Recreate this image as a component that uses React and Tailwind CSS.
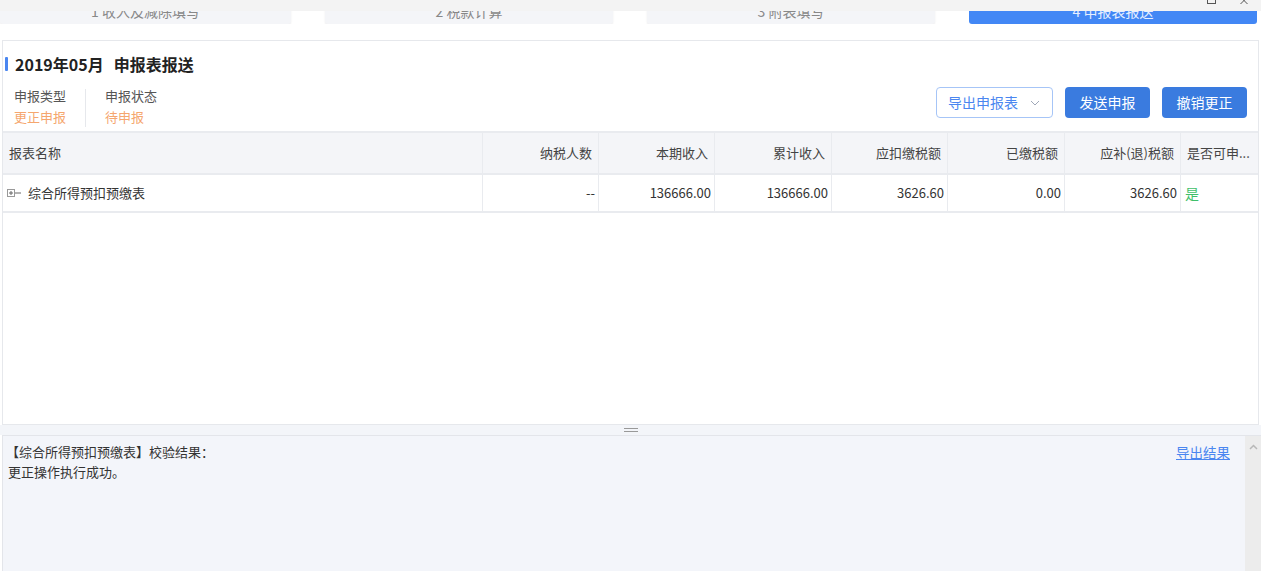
import React from 'react';

const cols = [
  { title: '报表名称', value: '综合所得预扣预缴表', align: 'left' },
  { title: '纳税人数', value: '--', align: 'right' },
  { title: '本期收入', value: '136666.00', align: 'right' },
  { title: '累计收入', value: '136666.00', align: 'right' },
  { title: '应扣缴税额', value: '3626.60', align: 'right' },
  { title: '已缴税额', value: '0.00', align: 'right' },
  { title: '应补(退)税额', value: '3626.60', align: 'right' },
  { title: '是否可申...', value: '是', align: 'left' },
];

const tabs = ['1 收入及减除填写', '2 税款计算', '3 附表填写', '4 申报表报送'];

const App = () => {
  return (
    <div
      className="w-[1261px] h-[571px] overflow-hidden bg-white text-[#333]"
      style={{ fontFamily: '"Noto Sans CJK SC", "Noto Sans", sans-serif' }}
    >
      {/* top: clipped step tabs under the window bar */}
      <div className="relative h-[24px] overflow-hidden">
        <div className="flex gap-[34px] mt-[-10px]">
          {tabs.map((t, i) => (
            <div
              key={t}
              className={
                'h-[34px] flex items-start justify-center pt-[12px] rounded-[3px] text-[14px] leading-[18px] ' +
                (i === 0 ? 'w-[291px] ' : 'w-[288px] ') +
                (i === 3
                  ? 'bg-[#4287f5] text-[#e6efff]'
                  : 'bg-[#f4f5f8] text-[#888] shadow-[0_1px_2px_rgba(0,0,0,0.08)]')
              }
            >
              {t}
            </div>
          ))}
        </div>
        <div className="absolute top-0 left-0 right-0 h-[11px] bg-[#f3f3f3] flex items-start justify-end pr-[12px] gap-[24px]">
          <div className="w-[9px] h-[5px] border-x border-b border-[#555] mt-[-1px]"></div>
          <svg width="9" height="6" viewBox="0 0 9 6" className="mt-[-1px]">
            <path d="M0.5 -2 L7.5 5 M7.5 -2 L0.5 5" stroke="#555" strokeWidth="1" fill="none" />
          </svg>
        </div>
      </div>

      <div className="h-[16px]"></div>

      {/* main panel */}
      <div className="mx-[2px] h-[385px] border border-[#e6e8ec] flex flex-col">
        <div className="flex items-center pt-[14px] h-[32px]">
          <div className="w-[3px] h-[14px] bg-[#4a86f0] ml-[2px] rounded-[1px]"></div>
          <div className="ml-[7px] text-[16px] font-bold leading-[18px] text-[#222]">
            2019年05月<span className="ml-[10px]">申报表报送</span>
          </div>
        </div>

        <div className="flex justify-between items-start h-[58px] pt-[12px]">
          <div className="flex pl-[11px] text-[13px] leading-[21px]">
            <div className="pr-[19px] border-r border-[#e6e8ec] my-[4px]">
              <div className="-mt-[4px] text-[#555]">申报类型</div>
              <div className="text-[#f5a66e]">更正申报</div>
            </div>
            <div className="pl-[19px]">
              <div className="text-[#555]">申报状态</div>
              <div className="text-[#f5a66e]">待申报</div>
            </div>
          </div>
          <div className="flex gap-[12px] pr-[11px] pt-[2px]">
            <div className="w-[117px] h-[31px] border border-[#a6c5f7] rounded-[4px] flex items-center pl-[11px] text-[14px] text-[#4a86f0]">
              导出申报表
              <svg width="10" height="6" viewBox="0 0 10 6" className="ml-[12px]">
                <path d="M1 1 L5 5 L9 1" stroke="#a0a8b8" strokeWidth="1" fill="none" />
              </svg>
            </div>
            <div className="w-[85px] h-[31px] bg-[#3a7bdf] rounded-[4px] flex items-center justify-center text-[14px] text-white">
              发送申报
            </div>
            <div className="w-[85px] h-[31px] bg-[#3a7bdf] rounded-[4px] flex items-center justify-center text-[14px] text-white">
              撤销更正
            </div>
          </div>
        </div>

        {/* table */}
        <div className="grid grid-cols-[480px_116px_116px_117px_116px_117px_116px_1fr] text-[13px]">
          {cols.map((c, i) => (
            <div
              key={'h' + i}
              className={
                'h-[44px] bg-[#f4f5f8] border-y-2 border-[#e9ebef] flex items-center text-[#444] ' +
                (i < cols.length - 1 ? 'border-r ' : '') +
                (c.align === 'right' ? 'justify-end pr-[6px]' : 'justify-start pl-[6px]')
              }
            >
              {c.title}
            </div>
          ))}
          {cols.map((c, i) => (
            <div
              key={'r' + i}
              className={
                'h-[38px] border-b-2 border-[#e9ebef] flex items-center text-[#333] ' +
                (i < cols.length - 1 ? 'border-r ' : '') +
                (c.align === 'right' ? 'justify-end pr-[3px]' : 'justify-start pl-[4px]')
              }
            >
              {i === 0 ? (
                <>
                  <svg width="15" height="9" viewBox="0 0 15 9" className="mr-[6px]">
                    <rect x="0.5" y="0.5" width="7" height="7" fill="none" stroke="#999" />
                    <path d="M2 4 H6 M4 2 V6 M8 4 H14" stroke="#666" strokeWidth="1" />
                  </svg>
                  {c.value}
                </>
              ) : i === cols.length - 1 ? (
                <span className="text-[#3fbf6a] text-[14px]">{c.value}</span>
              ) : (
                c.value
              )}
            </div>
          ))}
        </div>
        <div className="flex-1"></div>
      </div>

      {/* splitter */}
      <div className="h-[10px] bg-[#f3f5f9] flex items-center justify-center">
        <div className="w-[14px] h-[4px] border-y border-[#999]"></div>
      </div>

      {/* result panel */}
      <div className="ml-[2px] h-[140px] bg-[#f3f5fa] border-t border-l border-[#e3e5ea] flex">
        <div className="flex-1 pl-[3px] pt-[6px] text-[13px] leading-[20px] text-[#333] flex justify-between">
          <div>
            <div>【综合所得预扣预缴表】校验结果：</div>
            <div className="pl-[2px]">更正操作执行成功。</div>
          </div>
          <div className="text-[#4a86f0] underline pr-[15px] text-[13.5px]">导出结果</div>
        </div>
        <div className="w-[16px] bg-[#ececec] flex justify-center pt-[8px]">
          <svg width="9" height="6" viewBox="0 0 9 6">
            <path d="M1 5 L4.5 1.5 L8 5" stroke="#b8b8b8" strokeWidth="1.5" fill="none" />
          </svg>
        </div>
      </div>
    </div>
  );
};

export default App;
